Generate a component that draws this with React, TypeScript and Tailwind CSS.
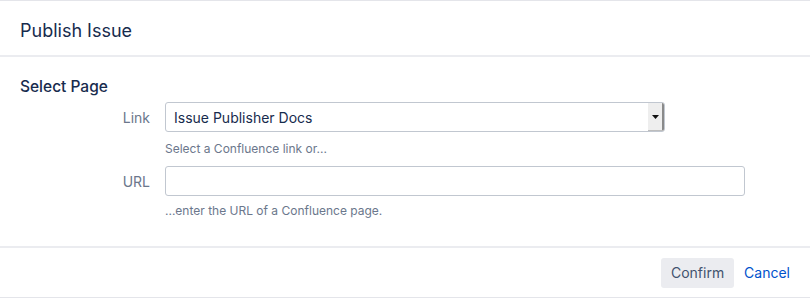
import React from "react";

export default function App() {
  return (
    <div
      className="w-[810px] h-[298px] bg-white flex flex-col border-t border-b border-[#e4e5ea] text-[#172b4d]"
      style={{ fontFamily: "Inter, 'Liberation Sans', sans-serif" }}
    >
      <div className="h-[56px] flex items-center px-5 pt-[6px] border-b-2 border-[#ebecf0] shrink-0">
        <h1 className="text-[18px] leading-6 font-normal">Publish Issue</h1>
      </div>
      <div className="flex-1 px-5 pt-[20px]">
        <h2 className="text-[15.5px] leading-5 font-medium">Select Page</h2>
        <div className="mt-[5px] grid grid-cols-[130px_1fr] gap-x-[15px]">
          <label className="h-[30px] flex items-center justify-end text-[14px] text-[#6b778c]">Link</label>
          <div>
            <div className="w-[500px] h-[30px] border border-[#c1c7d0] rounded-[3px] flex items-center overflow-hidden">
              <span className="flex-1 pl-[8px] text-[14px] text-[#172b4d]">Issue Publisher Docs</span>
              <div className="w-[16px] h-full bg-[#eeeeee] border-r-2 border-b border-r-[#8a8a8a] border-b-[#bdbdbd] flex items-center justify-center">
                <svg width="7" height="4" viewBox="0 0 7 4">
                  <path d="M0 0h7L3.5 4z" fill="#111" />
                </svg>
              </div>
            </div>
            <div className="h-[34px] flex items-center text-[12px] text-[#6b778c]">Select a Confluence link or...</div>
          </div>
          <label className="h-[30px] flex items-center justify-end text-[14px] text-[#6b778c]">URL</label>
          <div>
            <div className="w-[580px] h-[30px] border border-[#c1c7d0] rounded-[3px]" />
            <div className="h-[30px] flex items-center text-[12px] text-[#6b778c]">...enter the URL of a Confluence page.</div>
          </div>
        </div>
      </div>
      <div className="h-[51px] border-t-2 border-[#ebecf0] flex items-center justify-end pr-5 gap-[10px] shrink-0">
        <button className="h-[30px] w-[73px] rounded-[3px] bg-[#ebecf0] text-[14px] text-[#42526e]">Confirm</button>
        <button className="h-[30px] text-[14px] text-[#0052cc]">Cancel</button>
      </div>
    </div>
  );
}
